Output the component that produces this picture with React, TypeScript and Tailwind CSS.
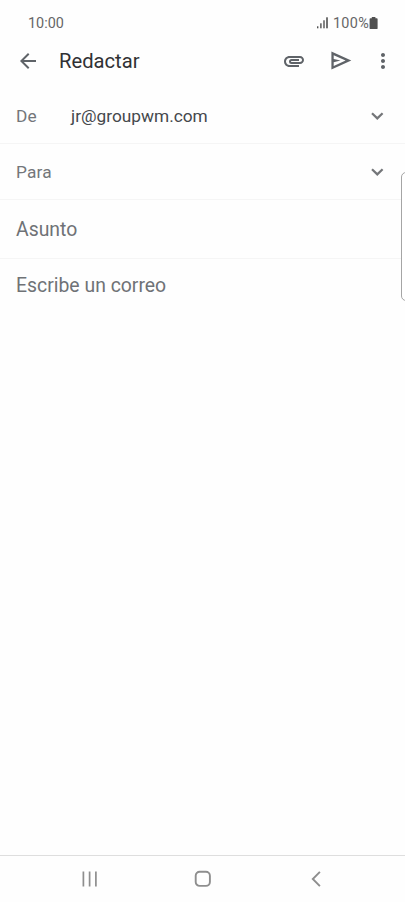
import { MdArrowBack, MdAttachment, MdMoreVert } from 'react-icons/md';

function SignalIcon() {
  return (
    <svg width="12" height="12" viewBox="0 0 12 12" fill="#505050">
      <rect x="0" y="9.3" width="1.4" height="2" />
      <rect x="3.2" y="6.3" width="1.4" height="5" />
      <rect x="6.3" y="3.3" width="1.4" height="8" />
      <rect x="9.2" y="0.3" width="1.6" height="11" />
    </svg>
  );
}

function BatteryIcon() {
  return (
    <svg width="9" height="13" viewBox="0 0 9 13" fill="#505050">
      <path d="M2.8 0h3.6v1.2H7.7a0.9 0.9 0 0 1 .9.9V11.2a.9.9 0 0 1-.9.9H1.5a.9.9 0 0 1-.9-.9V2.1a.9.9 0 0 1 .9-.9h1.3z" />
    </svg>
  );
}

function SendIcon() {
  return (
    <svg width="24" height="24" viewBox="0 0 24 24" fill="#5f6368">
      <path d="M2.4 2.6v18L22.3 11.6zM4.7 6.2 16.6 11.6 4.7 17V13.2L11.5 11.6 4.7 10z" fillRule="evenodd" />
    </svg>
  );
}

function Chevron() {
  return (
    <svg width="14" height="10" viewBox="0 0 14 10" fill="none" stroke="#747679" strokeWidth="2.2">
      <path d="M2 2.2 7.3 7.4 12.6 2.2" />
    </svg>
  );
}

function StatusBar() {
  return (
    <div className="h-[37px] pt-[10px] flex items-center justify-between pl-7 pr-[27px] text-[14.4px] text-[#666666]">
      <span>10:00</span>
      <div className="flex items-center">
        <SignalIcon />
        <span className="ml-1 tracking-[0.3px]">100%</span>
        <BatteryIcon />
      </div>
    </div>
  );
}

function AppBar() {
  return (
    <header className="h-12 flex items-center pl-4 pr-[10px] text-[#5f6368]">
      <MdArrowBack size={24} />
      <h1 className="ml-[19px] text-[20.2px] text-[#303134]">Redactar</h1>
      <div className="ml-auto flex items-center">
        <MdAttachment size={24} className="-mt-px" />
        <div className="ml-[23px] mr-[18px]">
          <SendIcon />
        </div>
        <MdMoreVert size={24} />
      </div>
    </header>
  );
}

function AddressRow({ label, value }: { label: string; value?: string }) {
  return (
    <div className="h-14 flex items-center border-b border-[#f5f5f5] pl-4 pr-[21px] text-[17.3px]">
      <span className="w-[55px] pt-0.5 tracking-[0.2px] text-[#73767a]">{label}</span>
      <span className="pt-0.5 text-[#45484c]">{value}</span>
      <div className="ml-auto">
        <Chevron />
      </div>
    </div>
  );
}

function NavBar() {
  return (
    <nav className="h-[47px] flex items-center border-t border-[#dedede] pb-px text-[#8e8e8e]">
      <svg width="16" height="16" viewBox="0 0 16 16" className="ml-[82px]" fill="none" stroke="currentColor" strokeWidth="1.7">
        <path d="M1.4 0.5v15M7.6 0.5v15M13.9 0.5v15" />
      </svg>
      <svg width="18" height="18" viewBox="0 0 18 18" className="ml-24" fill="none" stroke="currentColor" strokeWidth="1.9">
        <rect x="1.7" y="1.7" width="14.2" height="14.2" rx="4" />
      </svg>
      <svg width="10" height="16" viewBox="0 0 10 16" className="ml-[99px]" fill="none" stroke="currentColor" strokeWidth="1.9">
        <path d="M8.9 0.9 1.8 8l7.1 7.1" />
      </svg>
    </nav>
  );
}

export default function App() {
  return (
    <div className="relative w-[405px] h-[902px] overflow-hidden flex flex-col bg-[#fefefe] font-['Roboto',sans-serif]">
      <StatusBar />
      <AppBar />
      <main className="flex-1 pt-[3px]">
        <AddressRow label="De" value="jr@groupwm.com" />
        <AddressRow label="Para" />
        <div className="h-[59px] flex items-center border-b border-[#f5f5f5] px-4 pt-0.5 text-[19.4px] text-[#6f7276]">Asunto</div>
        <div className="h-[54px] flex items-center px-4 text-[19.4px] text-[#6f7276]">Escribe un correo</div>
      </main>
      <NavBar />
      {/* edge panel handle */}
      <div className="absolute left-[401px] top-[172px] w-3 h-[129px] rounded-[5px] border border-[#a5a5a5] bg-white" />
    </div>
  );
}
